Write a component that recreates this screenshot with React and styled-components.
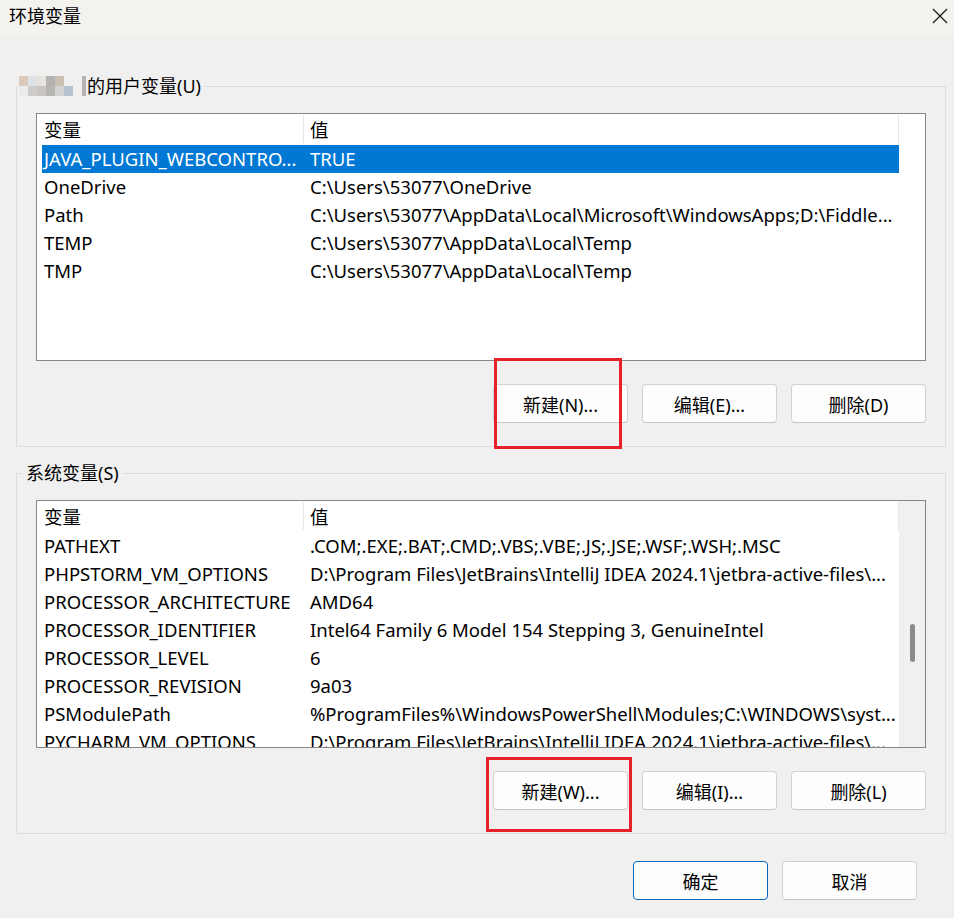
import React from "react";
import styled, { createGlobalStyle } from "styled-components";

const GlobalStyle = createGlobalStyle`
  html, body {
    margin: 0;
    padding: 0;
    background: #f0f0f0;
  }
  * {
    box-sizing: border-box;
  }
`;

const FONT = `"Noto Sans", "Noto Sans CJK SC", sans-serif`;

const Window = styled.div`
  position: relative;
  width: 954px;
  height: 918px;
  display: flex;
  flex-direction: column;
  background: #f0f0f0;
  font-family: ${FONT};
  color: #000;
  overflow: hidden;
`;

const TitleBar = styled.div`
  height: 37px;
  flex-shrink: 0;
  display: flex;
  align-items: center;
  justify-content: space-between;
  padding: 0 3px 0 9px;
  background: #f4f2ee;
`;

const Title = styled.span`
  font-size: 18px;
  line-height: 22px;
  margin-top: -5px;
`;

const CloseButton = styled.button`
  width: 22px;
  height: 22px;
  padding: 0;
  border: 0;
  background: transparent;
  display: flex;
  align-items: center;
  justify-content: center;
  margin-top: -6px;
`;

const Content = styled.div`
  display: flex;
  flex-direction: column;
  padding: 0 8px 0 16px;
`;

const Group = styled.fieldset`
  margin: ${(p) => p.$top}px 0 0 0;
  padding: 16px 0 23px 0;
  border: 1px solid #dcdcdc;
  min-width: 0;
`;

const Legend = styled.legend`
  margin-left: ${(p) => p.$indent}px;
  padding: 0 ${(p) => p.$pad}px;
  font-size: 18px;
  line-height: 22px;
  display: flex;
  align-items: center;
`;

const GroupBody = styled.div`
  padding: 0 19px;
  display: flex;
  flex-direction: column;
`;

const ListBox = styled.div`
  height: 248px;
  border: 1px solid #868686;
  background: #fff;
  display: flex;
  overflow: hidden;
`;

const ListBody = styled.div`
  flex: 1;
  padding-left: 5px;
  overflow: hidden;
  font-size: 18.5px;
`;

const Gutter = styled.div`
  width: 26px;
  flex-shrink: 0;
  background: ${(p) => (p.$scroll ? "#f0f0f0" : "#fff")};
  display: flex;
  justify-content: center;
`;

const Thumb = styled.div`
  width: 5px;
  height: 38px;
  margin-top: 123px;
  margin-left: 1px;
  border-radius: 3px;
  background: #8a8a8a;
`;

const HeaderRow = styled.div`
  display: flex;
  height: 31px;
  align-items: stretch;
`;

const HeaderCell = styled.div`
  display: flex;
  align-items: center;
  width: ${(p) => (p.$first ? "262px" : "auto")};
  flex: ${(p) => (p.$first ? "none" : "1")};
  padding-left: ${(p) => (p.$first ? 2 : 6)}px;
  margin: 1px 0 2px;
  border-right: 1px solid #e5e5e5;
  white-space: nowrap;
`;

const Row = styled.div`
  display: flex;
  height: 28px;
  align-items: center;
  background: ${(p) => (p.$selected ? "#0078d4" : "transparent")};
  color: ${(p) => (p.$selected ? "#fff" : "#000")};
`;

const Cell = styled.div`
  width: ${(p) => (p.$first ? "262px" : "auto")};
  flex: ${(p) => (p.$first ? "none" : "1")};
  min-width: 0;
  padding-left: ${(p) => (p.$first ? 2 : 6)}px;
  line-height: 26px;
  white-space: nowrap;
  overflow: hidden;
  text-overflow: ellipsis;
`;

const ButtonRow = styled.div`
  display: flex;
  justify-content: flex-end;
  gap: 14px;
  margin-top: 23px;
`;

const Button = styled.button`
  width: 135px;
  height: 39px;
  font-family: ${FONT};
  font-size: 18px;
  color: #000;
  background: #fdfdfd;
  border: 1px solid ${(p) => (p.$primary ? "#0067c0" : "#d2d2d2")};
  border-bottom-color: ${(p) => (p.$primary ? "#0067c0" : "#c4c4c4")};
  border-radius: 4px;
  padding: 0;
`;

const Footer = styled.div`
  display: flex;
  justify-content: flex-end;
  gap: 14px;
  margin: 27px 29px 0 0;
`;

const Annotation = styled.div`
  position: absolute;
  left: ${(p) => p.$x}px;
  top: ${(p) => p.$y}px;
  width: ${(p) => p.$w}px;
  height: ${(p) => p.$h}px;
  border: 3px solid #e8202a;
  pointer-events: none;
`;

const Mosaic = () => (
  <svg width="68" height="20" viewBox="0 0 68 20">
    <rect x="0" y="0" width="9" height="10" fill="#dcc9ba" />
    <rect x="9" y="0" width="9" height="10" fill="#dde2e6" />
    <rect x="18" y="0" width="9" height="10" fill="#e7e4e0" />
    <rect x="27" y="0" width="9" height="10" fill="#b5b3b1" />
    <rect x="36" y="0" width="9" height="10" fill="#cbbeb3" />
    <rect x="0" y="10" width="9" height="10" fill="#ececec" />
    <rect x="9" y="10" width="9" height="10" fill="#cfcbc8" />
    <rect x="18" y="10" width="9" height="10" fill="#c8c5c2" />
    <rect x="27" y="10" width="9" height="10" fill="#b8b6b3" />
    <rect x="36" y="10" width="9" height="10" fill="#d3d2d1" />
    <rect x="45" y="10" width="9" height="10" fill="#b5c1cc" />
    <rect x="63" y="0" width="4" height="20" fill="#b7b1b1" />
  </svg>
);

const userVars = [
  ["JAVA_PLUGIN_WEBCONTRO...", "TRUE"],
  ["OneDrive", "C:\\Users\\53077\\OneDrive"],
  ["Path", "C:\\Users\\53077\\AppData\\Local\\Microsoft\\WindowsApps;D:\\Fiddle..."],
  ["TEMP", "C:\\Users\\53077\\AppData\\Local\\Temp"],
  ["TMP", "C:\\Users\\53077\\AppData\\Local\\Temp"],
];

const systemVars = [
  ["PATHEXT", ".COM;.EXE;.BAT;.CMD;.VBS;.VBE;.JS;.JSE;.WSF;.WSH;.MSC"],
  ["PHPSTORM_VM_OPTIONS", "D:\\Program Files\\JetBrains\\IntelliJ IDEA 2024.1\\jetbra-active-files\\..."],
  ["PROCESSOR_ARCHITECTURE", "AMD64"],
  ["PROCESSOR_IDENTIFIER", "Intel64 Family 6 Model 154 Stepping 3, GenuineIntel"],
  ["PROCESSOR_LEVEL", "6"],
  ["PROCESSOR_REVISION", "9a03"],
  ["PSModulePath", "%ProgramFiles%\\WindowsPowerShell\\Modules;C:\\WINDOWS\\syst..."],
  ["PYCHARM_VM_OPTIONS", "D:\\Program Files\\JetBrains\\IntelliJ IDEA 2024.1\\jetbra-active-files\\..."],
];

const VarList = ({ rows, selected, scroll }) => (
  <ListBox>
    <ListBody>
      <HeaderRow>
        <HeaderCell $first>变量</HeaderCell>
        <HeaderCell>值</HeaderCell>
      </HeaderRow>
      {rows.map(([name, value], i) => (
        <Row key={name} $selected={i === selected}>
          <Cell $first>{name}</Cell>
          <Cell>{value}</Cell>
        </Row>
      ))}
    </ListBody>
    <Gutter $scroll={scroll}>{scroll && <Thumb />}</Gutter>
  </ListBox>
);

const App = () => {
  return (
    <Window>
      <GlobalStyle />
      <TitleBar>
        <Title>环境变量</Title>
        <CloseButton aria-label="关闭">
          <svg width="16" height="16" viewBox="0 0 16 16">
            <path d="M1 1L15 15M15 1L1 15" stroke="#1a1a1a" strokeWidth="1.3" fill="none" />
          </svg>
        </CloseButton>
      </TitleBar>

      <Content>
        <Group $top={38}>
          <Legend $indent={0} $pad={2}>
            <Mosaic />
            的用户变量(U)
          </Legend>
          <GroupBody>
            <VarList rows={userVars} selected={0} />
            <ButtonRow>
              <Button>新建(N)...</Button>
              <Button>编辑(E)...</Button>
              <Button>删除(D)</Button>
            </ButtonRow>
          </GroupBody>
        </Group>

        <Group $top={15}>
          <Legend $indent={6} $pad={3}>
            系统变量(S)
          </Legend>
          <GroupBody>
            <VarList rows={systemVars} scroll />
            <ButtonRow>
              <Button>新建(W)...</Button>
              <Button>编辑(I)...</Button>
              <Button>删除(L)</Button>
            </ButtonRow>
          </GroupBody>
        </Group>

        <Footer>
          <Button $primary>确定</Button>
          <Button>取消</Button>
        </Footer>
      </Content>

      <Annotation $x={494} $y={358} $w={128} $h={91} />
      <Annotation $x={486} $y={757} $w={146} $h={75} />
    </Window>
  );
};

export default App;
